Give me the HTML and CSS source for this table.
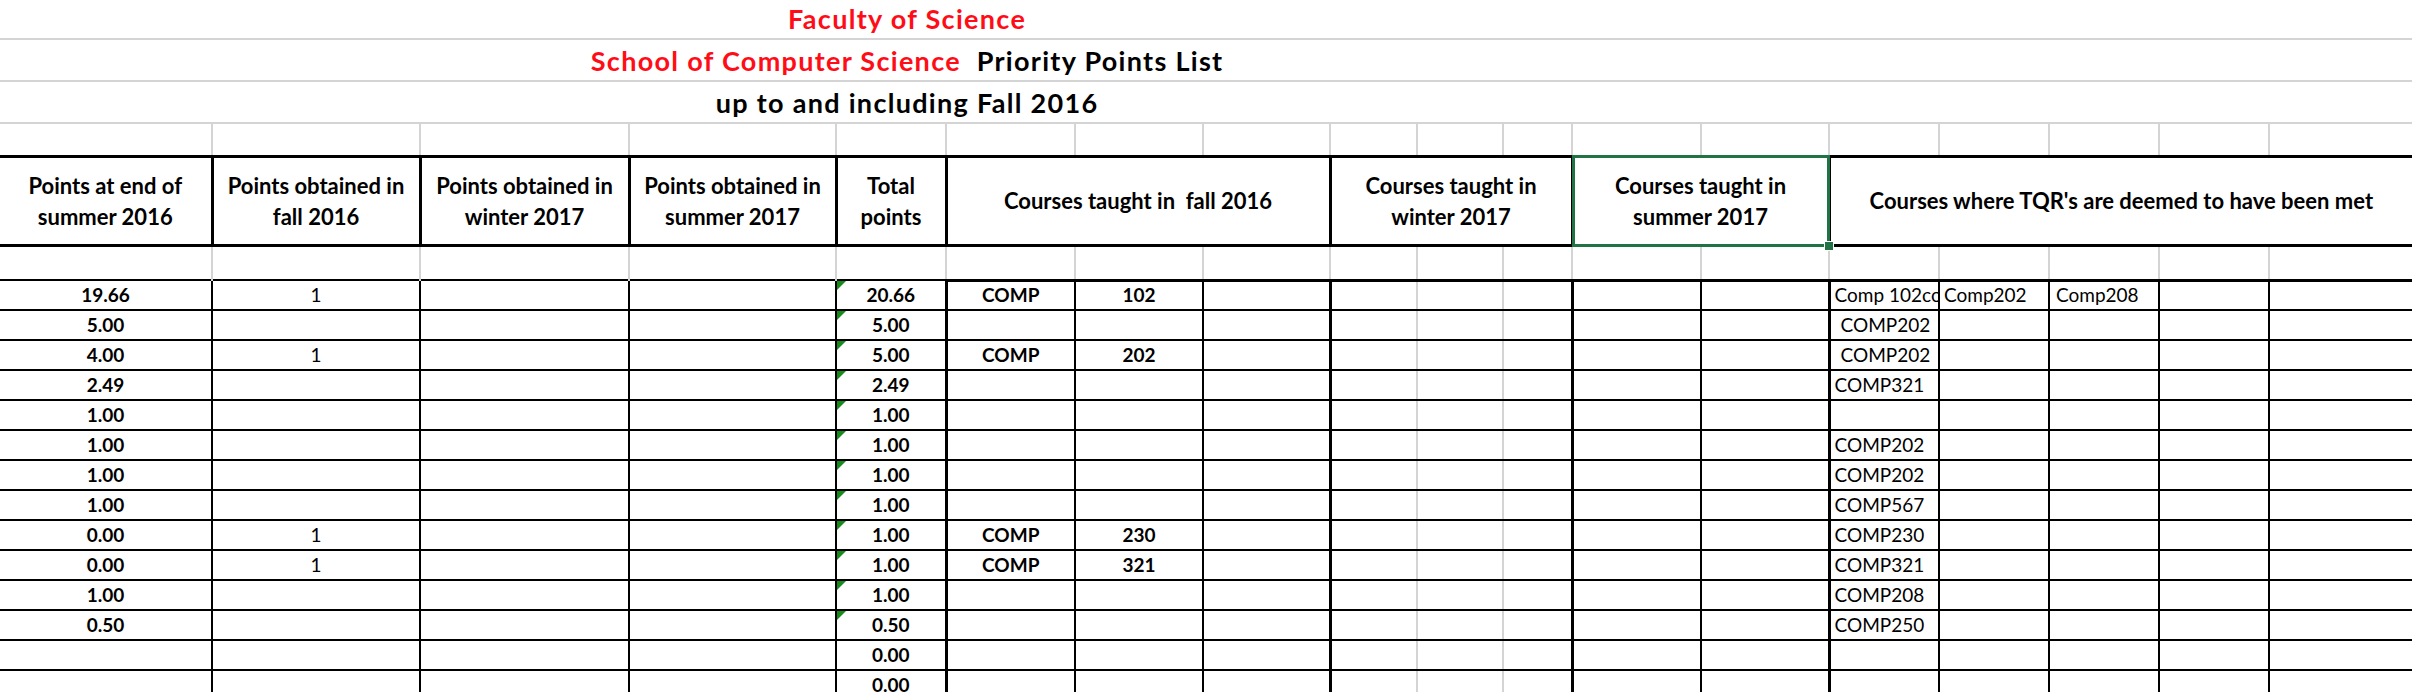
FILE: index.html
```html
<!DOCTYPE html>
<html lang="en">
<head>
<meta charset="utf-8">
<title>Priority Points List</title>
<link rel="stylesheet" href="styles.css">
</head>
<body>
<table class="sheet">
<colgroup>
<col class="w212"><col class="w208"><col class="w209"><col class="w207"><col class="w110"><col class="w129"><col class="w128"><col class="w127"><col class="w87"><col class="w86"><col class="w69"><col class="w129"><col class="w128"><col class="w110"><col class="w110"><col class="w110"><col class="w110"><col class="w143">
</colgroup>
<tbody>
<tr class="t1"><td colspan="18" class="title"><span class="red">Faculty of Science</span></td></tr>
<tr class="t2"><td colspan="18" class="title"><span class="red">School of Computer Science</span>&nbsp; Priority Points List</td></tr>
<tr class="t3"><td colspan="18" class="title">up to and including Fall 2016</td></tr>
<tr class="gap g1"><td></td><td></td><td></td><td></td><td></td><td></td><td></td><td></td><td></td><td></td><td></td><td></td><td></td><td></td><td></td><td></td><td></td><td></td></tr>
<tr class="head">
<th>Points at end of<br>summer 2016</th>
<th>Points obtained in<br>fall 2016</th>
<th>Points obtained in<br>winter 2017</th>
<th>Points obtained in<br>summer 2017</th>
<th>Total<br>points</th>
<th colspan="3">Courses taught in&nbsp; fall 2016</th>
<th colspan="3">Courses taught in<br>winter 2017</th>
<th colspan="2" class="selected">Courses taught in<br>summer 2017<div class="sel"><span class="handle"></span></div></th>
<th colspan="5">Courses where TQR's are deemed to have been met</th>
</tr>
<tr class="gap g2"><td></td><td></td><td></td><td></td><td></td><td></td><td></td><td></td><td></td><td></td><td></td><td></td><td></td><td></td><td></td><td></td><td></td><td></td></tr>
<tr class="row first"><td class="b">19.66</td><td>1</td><td></td><td></td><td class="b tri">20.66</td><td class="b">COMP</td><td class="b">102</td><td></td><td></td><td></td><td></td><td></td><td></td><td class="tq">Comp 102comp</td><td class="tq">Comp202</td><td class="tq tq2">Comp208</td><td></td><td></td></tr>
<tr class="row"><td class="b">5.00</td><td></td><td></td><td></td><td class="b tri">5.00</td><td></td><td></td><td></td><td></td><td></td><td></td><td></td><td></td><td class="tq ind">COMP202</td><td></td><td></td><td></td><td></td></tr>
<tr class="row"><td class="b">4.00</td><td>1</td><td></td><td></td><td class="b tri">5.00</td><td class="b">COMP</td><td class="b">202</td><td></td><td></td><td></td><td></td><td></td><td></td><td class="tq ind">COMP202</td><td></td><td></td><td></td><td></td></tr>
<tr class="row"><td class="b">2.49</td><td></td><td></td><td></td><td class="b tri">2.49</td><td></td><td></td><td></td><td></td><td></td><td></td><td></td><td></td><td class="tq">COMP321</td><td></td><td></td><td></td><td></td></tr>
<tr class="row"><td class="b">1.00</td><td></td><td></td><td></td><td class="b tri">1.00</td><td></td><td></td><td></td><td></td><td></td><td></td><td></td><td></td><td class="tq"></td><td></td><td></td><td></td><td></td></tr>
<tr class="row"><td class="b">1.00</td><td></td><td></td><td></td><td class="b tri">1.00</td><td></td><td></td><td></td><td></td><td></td><td></td><td></td><td></td><td class="tq">COMP202</td><td></td><td></td><td></td><td></td></tr>
<tr class="row"><td class="b">1.00</td><td></td><td></td><td></td><td class="b tri">1.00</td><td></td><td></td><td></td><td></td><td></td><td></td><td></td><td></td><td class="tq">COMP202</td><td></td><td></td><td></td><td></td></tr>
<tr class="row"><td class="b">1.00</td><td></td><td></td><td></td><td class="b tri">1.00</td><td></td><td></td><td></td><td></td><td></td><td></td><td></td><td></td><td class="tq">COMP567</td><td></td><td></td><td></td><td></td></tr>
<tr class="row"><td class="b">0.00</td><td>1</td><td></td><td></td><td class="b tri">1.00</td><td class="b">COMP</td><td class="b">230</td><td></td><td></td><td></td><td></td><td></td><td></td><td class="tq">COMP230</td><td></td><td></td><td></td><td></td></tr>
<tr class="row"><td class="b">0.00</td><td>1</td><td></td><td></td><td class="b tri">1.00</td><td class="b">COMP</td><td class="b">321</td><td></td><td></td><td></td><td></td><td></td><td></td><td class="tq">COMP321</td><td></td><td></td><td></td><td></td></tr>
<tr class="row"><td class="b">1.00</td><td></td><td></td><td></td><td class="b tri">1.00</td><td></td><td></td><td></td><td></td><td></td><td></td><td></td><td></td><td class="tq">COMP208</td><td></td><td></td><td></td><td></td></tr>
<tr class="row"><td class="b">0.50</td><td></td><td></td><td></td><td class="b tri">0.50</td><td></td><td></td><td></td><td></td><td></td><td></td><td></td><td></td><td class="tq">COMP250</td><td></td><td></td><td></td><td></td></tr>
<tr class="row"><td></td><td></td><td></td><td></td><td class="b">0.00</td><td></td><td></td><td></td><td></td><td></td><td></td><td></td><td></td><td class="tq"></td><td></td><td></td><td></td><td></td></tr>
<tr class="row"><td></td><td></td><td></td><td></td><td class="b">0.00</td><td></td><td></td><td></td><td></td><td></td><td></td><td></td><td></td><td class="tq"></td><td></td><td></td><td></td><td></td></tr>
</tbody>
</table>
</body>
</html>
```

FILE: styles.css
```css
html, body {
  margin: 0;
  padding: 0;
  overflow: hidden;
  background: #fff;
}

body {
  font-family: Lato, "Open Sans", "Liberation Sans", sans-serif;
  color: #000;
}

.sheet {
  border-collapse: collapse;
  table-layout: fixed;
  width: 2412px;
}

.w212 { width: 212px; }
.w208 { width: 208px; }
.w209 { width: 209px; }
.w207 { width: 207px; }
.w110 { width: 110px; }
.w129 { width: 129px; }
.w128 { width: 128px; }
.w127 { width: 127px; }
.w87 { width: 87px; }
.w86 { width: 86px; }
.w69 { width: 69px; }
.w143 { width: 143px; }

td, th {
  padding: 0;
  overflow: hidden;
  white-space: nowrap;
}

/* Title rows */
.title {
  font-size: 27px;
  font-weight: 700;
  letter-spacing: 1.3px;
  text-align: center;
  vertical-align: bottom;
  padding: 0 598px 3px 0;
  border-bottom: 2px solid #d4d4d4;
}
.t1 { height: 39px; }
.t2 { height: 42px; }
.t3 { height: 42px; }
.red { color: #ff0d17; }

/* Empty gridline rows */
.gap td {
  border-left: 2px solid #d4d4d4;
  border-right: 2px solid #d4d4d4;
}
.gap td:first-child { border-left: none; }
.gap td:last-child { border-right: none; }
.g1 { height: 33px; }
.g2 { height: 35px; }

/* Header row */
.head { height: 89px; }
.head th {
  border: 3px solid #000;
  font-size: 22px;
  font-weight: 700;
  line-height: 31px;
  text-align: center;
  vertical-align: middle;
}
.head th:first-child { border-left: none; }
.head th:last-child { border-right: none; }

.selected { position: relative; overflow: visible; }
.sel {
  position: absolute;
  top: -3px;
  left: -2px;
  right: -2px;
  bottom: -3px;
  border: 3px solid #217346;
  pointer-events: none;
}
.handle {
  position: absolute;
  right: -7px;
  bottom: -7px;
  width: 8px;
  height: 8px;
  background: #217346;
  border: 1px solid #fff;
}

/* Data rows */
.row { height: 30px; }
.row td {
  border: 2px solid #000;
  font-size: 19px;
  font-weight: 400;
  text-align: center;
  vertical-align: middle;
  line-height: 26px;
}
.row td:first-child { border-left: none; }
.row td:last-child { border-right: none; }
.row td:nth-child(6),
.row td:nth-child(9),
.row td:nth-child(12),
.row td:nth-child(14) { border-left-width: 3px; }
.row td:nth-child(9) { border-right-color: #d4d4d4; }
.row td:nth-child(10) { border-left-color: #d4d4d4; border-right-color: #d4d4d4; }
.row td:nth-child(11) { border-left-color: #d4d4d4; }
.row.first td:nth-child(n+6) { border-top-width: 3px; }

.row td.b { font-weight: 700; }
.row td.tq {
  text-align: left;
  padding-left: 4px;
}
.row td.tq2 { padding-left: 6px; }
.row td.ind { padding-left: 10px; }

.tri { position: relative; }
.tri::before {
  content: "";
  position: absolute;
  top: 0;
  left: 0;
  border-top: 9px solid #178a1c;
  border-right: 9px solid transparent;
}
```
